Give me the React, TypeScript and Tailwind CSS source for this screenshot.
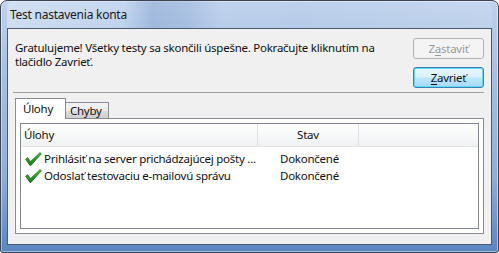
import React from 'react';

/**
 * Green check mark used in the task list
 */
function CheckIcon() {
  return (
    <svg width="17" height="14" viewBox="0 0 17 14" className="shrink-0">
      <defs>
        <linearGradient id="chk" x1="0" y1="0" x2="0" y2="1">
          <stop offset="0" stopColor="#4cbf3a" />
          <stop offset="1" stopColor="#137a13" />
        </linearGradient>
      </defs>
      <path
        d="M0.6 7.2 L2.6 5.6 L5.6 9.4 L15 0.6 L16.4 1.8 L6 13.4 L4.9 13.4 Z"
        fill="url(#chk)"
        stroke="#0f5e10"
        strokeWidth="0.6"
        strokeLinejoin="round"
      />
    </svg>
  );
}

/**
 * Win7 style push button
 */
function Button({
  label,
  mnemonicIndex,
  disabled = false,
  isDefault = false,
}: {
  label: string;
  mnemonicIndex: number;
  disabled?: boolean;
  isDefault?: boolean;
}) {
  const before = label.slice(0, mnemonicIndex);
  const key = label.slice(mnemonicIndex, mnemonicIndex + 1);
  const after = label.slice(mnemonicIndex + 1);
  return (
    <div
      className={
        disabled
          ? 'flex h-[21px] w-[71px] items-center justify-center rounded-[3px] border border-[#adb2b5] bg-[#f4f4f4] text-[#9a9a9a]'
          : isDefault
            ? 'flex h-[21px] w-[71px] items-center justify-center rounded-[3px] border border-[#3c7fb1] bg-[linear-gradient(#eaf6fd_0%,#d9f0fc_48%,#bee6fd_52%,#a7d9f5_100%)] text-[#111] shadow-[inset_0_0_0_1px_#5fd9fb]'
            : 'flex h-[21px] w-[71px] items-center justify-center rounded-[3px] border border-[#707070] bg-[linear-gradient(#f2f2f2,#dddddd_50%,#cfcfcf)] text-[#111]'
      }
    >
      <span className="leading-[13px]">
        {before}
        <span className="underline underline-offset-[2px]">{key}</span>
        {after}
      </span>
    </div>
  );
}

/**
 * One row of the task list
 */
function TaskRow({ task, status }: { task: string; status: string }) {
  return (
    <div className="flex h-[17px] items-center">
      <div className="flex w-[237px] items-center gap-[2px] overflow-hidden pl-[4px]">
        <CheckIcon />
        <span className="whitespace-nowrap text-[#111]">{task}</span>
      </div>
      <div className="w-[101px] pl-[22px] text-[#111]">{status}</div>
    </div>
  );
}

export default function App() {
  return (
    <div className="h-[253px] w-[499px] bg-white text-[11.5px] tracking-[-0.25px] font-['Noto_Sans',sans-serif]">
      {/* Window frame */}
      <div className="flex h-full flex-col rounded-t-[7px] rounded-b-[3px] border border-[#3b4452] bg-[linear-gradient(#bfd2ec_0%,#a9c2e4_25%,#8eaedb_70%,#5b85c2_100%)] px-[6px] pb-[7px] shadow-[inset_0_0_0_1px_rgba(255,255,255,0.45)]">
        {/* Title bar */}
        <div className="flex h-[27px] items-center rounded-t-[6px] bg-[linear-gradient(90deg,rgba(225,235,248,0.55)_0%,rgba(210,225,245,0.35)_24%,rgba(120,150,200,0.35)_30%,rgba(130,160,205,0.3)_37%,rgba(200,215,240,0.15)_44%,rgba(0,0,0,0)_60%,rgba(255,255,255,0.12)_100%)] pl-[3px] text-[12px] text-[#1b1b1b]">
          Test nastavenia konta
        </div>

        {/* Client area */}
        <div className="flex flex-1 flex-col border border-[#4b5a6f] bg-[#f0f0f0]">
          <div className="flex pl-[7px] pr-[7px] pt-[9px]">
            <p className="mt-[3px] flex-1 leading-[14px] text-[#111]">
              Gratulujeme! Všetky testy sa skončili úspešne. Pokračujte kliknutím na
              <br />
              tlačidlo Zavrieť.
            </p>
            <div className="flex flex-col gap-[8px]">
              <Button label="Zastaviť" mnemonicIndex={1} disabled />
              <Button label="Zavrieť" mnemonicIndex={0} isDefault />
            </div>
          </div>

          {/* Separator */}
          <div className="ml-[5px] mr-[7px] mt-[4px] h-px bg-[#a0a0a0]" />

          {/* Tabs */}
          <div className="ml-[7px] mt-[5px] flex items-end">
            <div className="relative z-10 -mb-px flex h-[21px] w-[51px] items-center border border-b-0 border-[#898c95] bg-white pl-[7px] text-[#111]">
              Úlohy
            </div>
            <div className="flex h-[16px] w-[43px] items-center border border-b-0 border-l-0 border-[#898c95] bg-[linear-gradient(#f2f2f2,#ebebeb_50%,#dddddd_51%,#cfcfcf)] pl-[4px] text-[#111]">
              Chyby
            </div>
          </div>

          {/* Tab panel */}
          <div className="mb-[10px] ml-[7px] mr-[7px] flex flex-1 flex-col border border-[#898c95] bg-white p-[4px]">
            <div className="flex flex-1 flex-col border border-[#828790] bg-white">
              {/* Header */}
              <div className="flex h-[23px] border-b border-[#e5e5e5] bg-[linear-gradient(#ffffff,#f7f8f9_50%,#f1f2f4)] text-[#111]">
                <div className="flex w-[237px] items-center border-r border-[#dfe3e8] pl-[3px]">Úlohy</div>
                <div className="flex w-[101px] items-center justify-center border-r border-[#dfe3e8]">Stav</div>
                <div className="flex-1" />
              </div>
              {/* Rows */}
              <div className="pt-[3px]">
                <TaskRow task="Prihlásiť na server prichádzajúcej pošty ..." status="Dokončené" />
                <TaskRow task="Odoslať testovaciu e-mailovú správu" status="Dokončené" />
              </div>
            </div>
          </div>
        </div>
      </div>
    </div>
  );
}
